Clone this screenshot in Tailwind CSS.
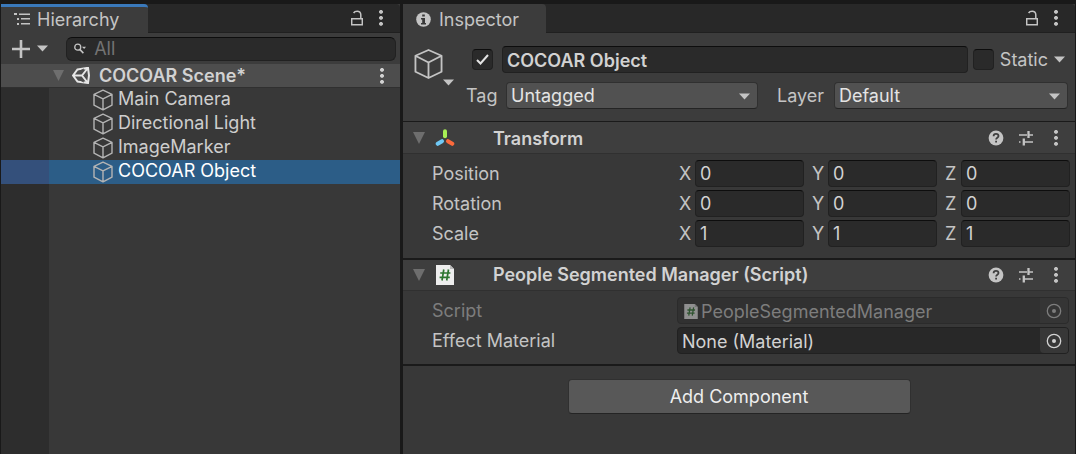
<!DOCTYPE html>
<html lang="en">
<head>
<meta charset="utf-8">
<meta name="viewport" content="width=device-width, initial-scale=1">
<title>Unity Editor</title>
<script src="https://cdn.jsdelivr.net/npm/@tailwindcss/browser@4"></script>
</head>
<body class="bg-[#191919] font-['Inter',sans-serif] text-[18px] leading-6 text-[#c4c4c4]">
<svg class="hidden" aria-hidden="true">
  <symbol id="cube" viewBox="0 0 20 22"><path d="M10 1.2 19 5.4V16.200L10 20.800 1 16.200V5.400ZM1 5.400 10 9.800 19 5.400M10 9.800V20.800" fill="none" stroke="currentColor" stroke-width="1.400" stroke-linejoin="round"/></symbol>
  <symbol id="bigcube" viewBox="0 0 30 32"><path d="M15 1.500 28.500 7.500V24L15 30.500 1.500 24V7.500ZM1.500 7.500 15 14.500 28.500 7.500M15 14.500V30.500" fill="none" stroke="currentColor" stroke-width="1.900" stroke-linejoin="round"/></symbol>
  <symbol id="down" viewBox="0 0 11 7"><path d="M0 .5h11L5.500 6.500Z" fill="currentColor"/></symbol>
  <symbol id="fold" viewBox="0 0 12 12"><path d="M0 0h12L6 12Z" fill="#6e6e6e"/></symbol>
  <symbol id="dots" viewBox="0 0 4 16"><path d="M0 1.200 1.200 0h1.600L4 1.200v1.400L2.800 3.800H1.200L0 2.600ZM0 7.200 1.200 6h1.600L4 7.200v1.400L2.800 9.800H1.200L0 8.600ZM0 13.200 1.200 12h1.600L4 13.200v1.400l-1.200 1.200H1.200L0 14.600Z" fill="currentColor"/></symbol>
  <symbol id="lock" viewBox="0 0 12 16"><path d="M.7 8.700h10.600v6H.7ZM9.800 8.700V4.800C9.800 2.400 8.300 1.200 6.200 1.200 4.600 1.200 3.300 1.800 2.600 3" fill="none" stroke="currentColor" stroke-width="1.500"/></symbol>
  <symbol id="help" viewBox="0 0 16 16"><circle cx="8" cy="8" r="7.400" fill="currentColor"/><path d="M5.600 6.200C5.600 4.600 6.600 3.900 8 3.900s2.500.8 2.500 2.100c0 1.700-2.400 1.700-2.400 3.500M8.100 10.700v1.900" fill="none" stroke="#3e3e3e" stroke-width="1.800"/></symbol>
  <symbol id="preset" viewBox="0 0 16 16"><path d="M1 5h8M11 5h4M1 12h1.500M5 12h10" stroke="currentColor" stroke-width="1.300"/><path d="M10.500 1v7M5.800 8.500v7" stroke="currentColor" stroke-width="2.300"/></symbol>
  <symbol id="script" viewBox="0 0 18 20"><path d="M0 0h14l4 4v16H0Z" fill="#eee"/><path d="M14 0v4h4Z" fill="#bbb"/><path d="M7.800 4.500 6 15.500M12.500 4.500l-1.800 11M4.200 8h10.200M3.600 12.300h10.200" stroke="#2c752f" stroke-width="1.700"/></symbol>
  <symbol id="target" viewBox="0 0 16 16"><circle cx="8" cy="8" r="6.700" fill="none" stroke="currentColor" stroke-width="1.300"/><circle cx="8" cy="8" r="2" fill="currentColor"/></symbol>
</svg>
<main class="grid min-h-screen grid-cols-[399fr_672fr] gap-[3px] px-px pt-1">
  <section class="flex flex-col bg-[#383838]" aria-label="Hierarchy">
    <header class="flex h-[29px] items-stretch justify-between rounded-tr border-b border-[#202020] bg-[#282828]">
      <h2 class="-mb-px flex w-[147px] items-center gap-[7px] rounded-tr border-t-3 border-[#3a79bb] bg-[#3c3c3c] pl-[13px]">
        <svg class="size-4" viewBox="0 0 16 16" fill="currentColor"><path d="M0 1h3v2H0zM5 1.500h11v1.500H5zM3 6h2v2H3zM7 6h9v1.500H7zM3 11h2v2H3zM7 11h9v1.500H7z"/></svg>
        Hierarchy
      </h2>
      <div class="flex items-center gap-4 pr-[17px]">
        <button aria-label="Lock"><svg class="h-4 w-3"><use href="#lock"/></svg></button>
        <button aria-label="Options"><svg class="h-4 w-1"><use href="#dots"/></svg></button>
      </div>
    </header>
    <div class="flex h-[31px] items-center bg-[#3c3c3c] pr-1 pl-[11px]">
      <button class="flex items-center gap-[7px]" aria-label="Create">
        <svg class="size-[18px]" viewBox="0 0 18 18"><path d="M9 0v18M0 9h18" stroke="currentColor" stroke-width="2.600"/></svg>
        <svg class="h-[7px] w-[11px]"><use href="#down"/></svg>
      </button>
      <label class="ml-[18px] flex h-6 flex-1 items-center gap-2 rounded-md border border-t-[#0d0d0d] border-[#212121] bg-[#2a2a2a] pl-[7px]">
        <svg class="h-3 w-[13px]" viewBox="0 0 13 12"><circle cx="4" cy="4" r="3.200" fill="none" stroke="currentColor" stroke-width="1.400"/><path d="m6.200 6.400 3.800 4" stroke="currentColor" stroke-width="1.600"/><path d="M8.500 3.500H13L10.800 6Z" fill="currentColor"/></svg>
        <input class="w-full min-w-0 bg-transparent outline-none placeholder:text-[#737373]" placeholder="All" aria-label="Search hierarchy">
      </label>
    </div>
    <div class="flex h-6 items-center border-b border-[#303030] bg-[#4d4d4d] pr-4 pl-[52px] font-semibold text-[#d2d2d2]">
      <svg class="size-[11px]"><use href="#fold"/></svg>
      <svg class="mr-[9px] ml-2 h-[17px] w-[18px]" viewBox="0 0 18 17"><path d="M5.500 2.500 16 .8 17 8.500 16 16 5.500 14.500 1 8.500ZM1.500 8.500H10M10 8.500 15.500 1.500M10 8.500 15.500 15.500" fill="none" stroke="#e6e6e6" stroke-width="2"/><path d="M6.500 4.500 12 2M6.500 12.500 12 15" stroke="#4d4d4d" stroke-width="1"/></svg>
      <span class="flex-1">COCOAR Scene*</span>
      <button aria-label="Scene options"><svg class="h-4 w-1"><use href="#dots"/></svg></button>
    </div>
    <ul class="flex-1 bg-[linear-gradient(to_right,#2d2d2d_48px,#383838_48px)] text-[#cecece]">
      <li class="flex h-6 items-center gap-[5px] pl-[92px]"><svg class="h-[22px] w-5 text-[#b4b4b4]"><use href="#cube"/></svg><span class="pb-[2px]">Main Camera</span></li>
      <li class="flex h-6 items-center gap-[5px] pl-[92px]"><svg class="h-[22px] w-5 text-[#b4b4b4]"><use href="#cube"/></svg><span class="pb-[2px]">Directional Light</span></li>
      <li class="flex h-6 items-center gap-[5px] pl-[92px]"><svg class="h-[22px] w-5 text-[#b4b4b4]"><use href="#cube"/></svg><span class="pb-[2px]">ImageMarker</span></li>
      <li class="flex h-6 items-center gap-[5px] bg-[linear-gradient(to_right,#34507b_48px,#2c5d87_48px)] pl-[92px] text-white"><svg class="h-[22px] w-5 text-[#b4b4b4]"><use href="#cube"/></svg><span class="pb-[2px]">COCOAR Object</span></li>
    </ul>
  </section>

  <section class="bg-[#383838]" aria-label="Inspector">
    <header class="flex h-[29px] items-stretch justify-between rounded-tr border-b border-[#202020] bg-[#282828]">
      <h2 class="-mb-px flex w-[143px] items-center gap-2 rounded-tr bg-[#3c3c3c] pt-[2px] pl-[13px]">
        <svg class="size-[15px]" viewBox="0 0 15 15"><circle cx="7.500" cy="7.500" r="7.300" fill="currentColor"/><path d="M6.200 2.500h2.600v2H6.200zM5 6h4v5h1v1.500H5V11h1.200V7.500H5z" fill="#383838"/></svg>
        Inspector
      </h2>
      <div class="flex items-center gap-4 pr-[17px]">
        <button aria-label="Lock"><svg class="h-4 w-3"><use href="#lock"/></svg></button>
        <button aria-label="Options"><svg class="h-4 w-1"><use href="#dots"/></svg></button>
      </div>
    </header>

    <div class="flex border-b border-[#1a1a1a] bg-[#3c3c3c] pt-[13px] pr-[7px] pb-3 pl-[11px]">
      <button class="mt-[2px] flex h-[38px] w-10 items-end" aria-label="Object icon">
        <svg class="h-8 w-[30px] self-start"><use href="#bigcube"/></svg>
        <svg class="h-[7px] w-[11px] shrink-0"><use href="#down"/></svg>
      </button>
      <div class="flex flex-1 flex-col gap-[9px]">
        <div class="flex h-[27px] items-center">
          <span class="relative ml-[18px] flex size-[21px]">
            <input type="checkbox" checked aria-label="Active" class="size-full appearance-none rounded border border-t-[#0d0d0d] border-[#212121] bg-[#2a2a2a]">
            <svg class="pointer-events-none absolute inset-1 size-[13px]" viewBox="0 0 13 13"><path d="m1 7 3.500 3.500L12 2" fill="none" stroke="#e4e4e4" stroke-width="2"/></svg>
          </span>
          <input aria-label="Name" value="COCOAR Object" class="ml-[9px] h-full min-w-0 flex-1 rounded border border-t-[#0d0d0d] border-[#212121] bg-[#2a2a2a] px-1 pt-[2px] font-semibold text-[#d2d2d2]">
          <label class="ml-[5px] flex items-center gap-[6px]">
            <input type="checkbox" class="size-[21px] appearance-none rounded border border-t-[#0d0d0d] border-[#212121] bg-[#2a2a2a]">
            Static
          </label>
          <button class="mr-[3px] ml-[6px]" aria-label="Static flags"><svg class="h-[7px] w-[11px]"><use href="#down"/></svg></button>
        </div>
        <div class="flex h-[27px] items-center">
          <label for="tag" class="w-[52px] pl-3">Tag</label>
          <span class="relative h-full flex-[252]">
            <select id="tag" class="size-full appearance-none rounded border border-[#303030] border-b-[#242424] bg-[#515151] pl-1 text-[#e4e4e4]"><option>Untagged</option></select>
            <svg class="pointer-events-none absolute top-[11px] right-2 h-[7px] w-[11px]"><use href="#down"/></svg>
          </span>
          <label for="layer" class="w-[76px] pl-[19px]">Layer</label>
          <span class="relative h-full flex-[234]">
            <select id="layer" class="size-full appearance-none rounded border border-[#303030] border-b-[#242424] bg-[#515151] pl-1 text-[#e4e4e4]"><option>Default</option></select>
            <svg class="pointer-events-none absolute top-[11px] right-2 h-[7px] w-[11px]"><use href="#down"/></svg>
          </span>
        </div>
      </div>
    </div>

    <div class="flex h-8 items-center border-b border-[#303030] bg-[#3e3e3e] pr-[17px] pl-[10px]">
      <svg class="size-[12px]"><use href="#fold"/></svg>
      <svg class="ml-[10px] h-[18px] w-5" viewBox="0 0 20 18" stroke-width="4" stroke-linecap="round"><path d="M10 2.200V7.200" stroke="#a9ee55"/><path d="M7 12.200 2.700 14.800" stroke="#6fc8f5"/><path d="M13 12.200 17.300 14.800" stroke="#fb6a3c"/></svg>
      <h3 class="ml-[38px] flex-1 pt-[2px] font-semibold text-[#d2d2d2]">Transform</h3>
      <div class="flex items-center gap-[14px]">
        <button aria-label="Help"><svg class="size-4"><use href="#help"/></svg></button>
        <button aria-label="Presets"><svg class="size-4"><use href="#preset"/></svg></button>
        <button class="ml-[6px]" aria-label="Component options"><svg class="h-4 w-1"><use href="#dots"/></svg></button>
      </div>
    </div>
    <div class="flex flex-col gap-[3px] pt-[6px] pr-[5px] pb-[11px] pl-[29px]">
      <div class="grid h-[27px] grid-cols-[245px_1fr] items-center"><span>Position</span>
        <div class="grid h-[27px] grid-cols-3 gap-[6px]">
          <label class="flex items-center"><span class="w-[18px] pl-[2px]">X</span><input value="0" class="h-full min-w-0 flex-1 rounded border border-t-[#0d0d0d] border-[#212121] bg-[#2a2a2a] pl-1 text-[#d2d2d2]"></label>
          <label class="flex items-center"><span class="w-[18px] pl-[2px]">Y</span><input value="0" class="h-full min-w-0 flex-1 rounded border border-t-[#0d0d0d] border-[#212121] bg-[#2a2a2a] pl-1 text-[#d2d2d2]"></label>
          <label class="flex items-center"><span class="w-[18px] pl-[2px]">Z</span><input value="0" class="h-full min-w-0 flex-1 rounded border border-t-[#0d0d0d] border-[#212121] bg-[#2a2a2a] pl-1 text-[#d2d2d2]"></label>
        </div></div>
      <div class="grid h-[27px] grid-cols-[245px_1fr] items-center"><span>Rotation</span>
        <div class="grid h-[27px] grid-cols-3 gap-[6px]">
          <label class="flex items-center"><span class="w-[18px] pl-[2px]">X</span><input value="0" class="h-full min-w-0 flex-1 rounded border border-t-[#0d0d0d] border-[#212121] bg-[#2a2a2a] pl-1 text-[#d2d2d2]"></label>
          <label class="flex items-center"><span class="w-[18px] pl-[2px]">Y</span><input value="0" class="h-full min-w-0 flex-1 rounded border border-t-[#0d0d0d] border-[#212121] bg-[#2a2a2a] pl-1 text-[#d2d2d2]"></label>
          <label class="flex items-center"><span class="w-[18px] pl-[2px]">Z</span><input value="0" class="h-full min-w-0 flex-1 rounded border border-t-[#0d0d0d] border-[#212121] bg-[#2a2a2a] pl-1 text-[#d2d2d2]"></label>
        </div></div>
      <div class="grid h-[27px] grid-cols-[245px_1fr] items-center"><span>Scale</span>
        <div class="grid h-[27px] grid-cols-3 gap-[6px]">
          <label class="flex items-center"><span class="w-[18px] pl-[2px]">X</span><input value="1" class="h-full min-w-0 flex-1 rounded border border-t-[#0d0d0d] border-[#212121] bg-[#2a2a2a] pl-1 text-[#d2d2d2]"></label>
          <label class="flex items-center"><span class="w-[18px] pl-[2px]">Y</span><input value="1" class="h-full min-w-0 flex-1 rounded border border-t-[#0d0d0d] border-[#212121] bg-[#2a2a2a] pl-1 text-[#d2d2d2]"></label>
          <label class="flex items-center"><span class="w-[18px] pl-[2px]">Z</span><input value="1" class="h-full min-w-0 flex-1 rounded border border-t-[#0d0d0d] border-[#212121] bg-[#2a2a2a] pl-1 text-[#d2d2d2]"></label>
        </div></div>
    </div>

    <div class="flex h-[33px] items-center border-t-2 border-b border-t-[#1a1a1a] border-b-[#303030] bg-[#3e3e3e] pr-[17px] pl-[10px]">
      <svg class="size-[12px]"><use href="#fold"/></svg>
      <svg class="ml-[11px] h-5 w-[18px]"><use href="#script"/></svg>
      <h3 class="ml-[39px] flex-1 font-semibold text-[#d2d2d2]">People Segmented Manager (Script)</h3>
      <div class="flex items-center gap-[14px]">
        <button aria-label="Help"><svg class="size-4"><use href="#help"/></svg></button>
        <button aria-label="Presets"><svg class="size-4"><use href="#preset"/></svg></button>
        <button class="ml-[6px]" aria-label="Component options"><svg class="h-4 w-1"><use href="#dots"/></svg></button>
      </div>
    </div>
    <div class="flex flex-col gap-[3px] border-b-2 border-[#1a1a1a] pt-[6px] pr-[6px] pb-[10px] pl-[29px]">
      <div class="grid h-[27px] grid-cols-[245px_1fr] items-center"><span class="text-[#7d7d7d]">Script</span>
        <div class="flex h-full items-center overflow-hidden rounded border border-[#2b2b2b] bg-[#313131] pl-[6px] text-[#7d7d7d]">
          <svg class="mt-[2px] mr-[3px] h-[15px] w-[14px] opacity-50"><use href="#script"/></svg>
          <span class="flex-1 pt-[2px]">PeopleSegmentedManager</span>
          <button disabled class="flex h-full w-[28px] items-center justify-center bg-[#353535]" aria-label="Select script"><svg class="size-4"><use href="#target"/></svg></button>
        </div></div>
      <div class="grid h-[27px] grid-cols-[245px_1fr] items-center"><span>Effect Material</span>
        <div class="flex h-full items-center overflow-hidden rounded border border-[#212121] bg-[#282828] pl-1 text-[#d2d2d2]">
          <span class="flex-1 pt-[2px]">None (Material)</span>
          <button class="flex h-full w-[28px] items-center justify-center rounded-bl bg-[#373737]" aria-label="Select material"><svg class="size-4"><use href="#target"/></svg></button>
        </div></div>
    </div>
    <div class="flex justify-center pt-[13px]">
      <button class="h-[35px] w-[343px] rounded border border-[#303030] border-b-[#242424] bg-[#585858] text-[#eee]">Add Component</button>
    </div>
  </section>
</main>
</body>
</html>
